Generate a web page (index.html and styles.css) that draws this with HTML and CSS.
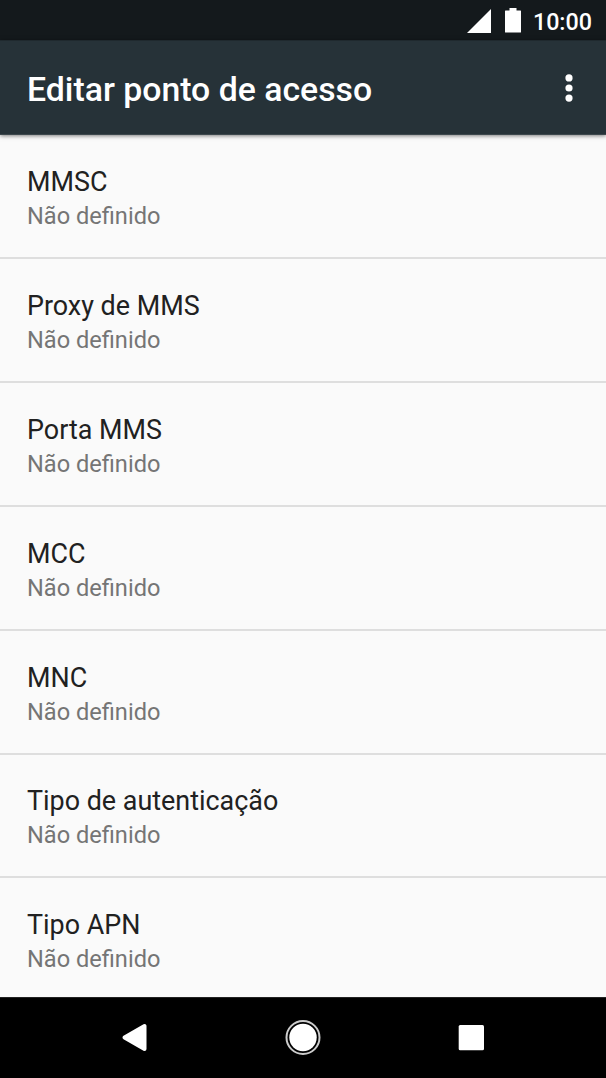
FILE: index.html
```html
<!DOCTYPE html>
<html lang="pt">
<head>
<meta charset="utf-8">
<title>Editar ponto de acesso</title>
<link rel="stylesheet" href="styles.css">
</head>
<body>
<div class="screen">
  <div class="status">
    <svg class="signal" width="24" height="24" viewBox="0 0 24 24"><path d="M24 0V24H0Z"/></svg>
    <svg class="battery" width="16" height="25" viewBox="0 0 16 25"><path d="M4.500 0H11.500V2.500H15.500Q16 2.500 16 3V24Q16 24.500 15.500 24.500H.5Q0 24.500 0 24V3Q0 2.500 .5 2.500H4.500Z"/></svg>
    <span class="clock">10:00</span>
  </div>
  <header class="bar">
    <h1 class="title">Editar ponto de acesso</h1>
    <svg class="more" width="8" height="28" viewBox="0 0 8 28"><circle cx="4" cy="3.900" r="3.600"/><circle cx="4" cy="14" r="3.600"/><circle cx="4" cy="24.100" r="3.600"/></svg>
  </header>
  <main class="list">
    <div class="row"><div class="name">MMSC</div><div class="value">Não definido</div></div>
    <div class="row"><div class="name">Proxy de MMS</div><div class="value">Não definido</div></div>
    <div class="row"><div class="name">Porta MMS</div><div class="value">Não definido</div></div>
    <div class="row"><div class="name">MCC</div><div class="value">Não definido</div></div>
    <div class="row"><div class="name">MNC</div><div class="value">Não definido</div></div>
    <div class="row"><div class="name">Tipo de autenticação</div><div class="value">Não definido</div></div>
    <div class="row"><div class="name">Tipo APN</div><div class="value">Não definido</div></div>
  </main>
  <nav class="nav">
    <svg width="36" height="36" viewBox="0 0 36 36"><path d="M7.500 17.500L27.500 6V29Z" stroke="#fff" stroke-width="4" stroke-linejoin="round"/></svg>
    <svg width="36" height="36" viewBox="0 0 36 36"><circle cx="18" cy="17.500" r="13.700"/><circle cx="18" cy="17.500" r="16.500" fill="none" stroke="#ccc" stroke-width="2"/></svg>
    <svg width="36" height="36" viewBox="0 0 36 36"><rect x="5.700" y="5" width="25.300" height="25.300" rx="1.500"/></svg>
  </nav>
</div>
</body>
</html>
```
FILE: styles.css
```css
body {
  margin: 0;
  font-family: Roboto, sans-serif;
}
.screen {
  width: 606px;
  height: 1078px;
  display: flex;
  flex-direction: column;
  overflow: hidden;
  background: #fafafa;
}
svg {
  display: block;
  fill: #fff;
}
.status {
  height: 40px;
  flex: none;
  display: flex;
  align-items: center;
  justify-content: flex-end;
  padding-right: 14px;
  box-sizing: border-box;
  background: #14191c;
}
.signal {
  margin-top: 1px;
}
.battery {
  margin: 0 12px 0 14px;
}
.clock {
  font-size: 23.3px;
  font-weight: 500;
  line-height: 40px;
  padding-top: 3px;
  color: #fff;
}
.bar {
  height: 95px;
  flex: none;
  display: flex;
  align-items: center;
  justify-content: space-between;
  padding: 0 33px 0 27px;
  box-sizing: border-box;
  background: #263238;
  border-top: 1px solid #1f292e;
  border-bottom: 1px solid #3c474c;
  box-shadow: 0 1px 4px rgba(0, 0, 0, 0.5);
  z-index: 1;
}
.title {
  margin: 4px 0 0;
  font-size: 33.8px;
  font-weight: 500;
  line-height: 40px;
  color: #fff;
}
.list {
  height: 862px;
  flex: none;
  box-sizing: border-box;
  padding-top: 0.6px;
  overflow: hidden;
}
.row {
  height: 123.8px;
  box-sizing: border-box;
  padding: 29.8px 27px 0;
  border-bottom: 2px solid #dedede;
}
.name {
  font-size: 26.9px;
  line-height: 34px;
  color: #212121;
}
.value {
  font-size: 23.6px;
  line-height: 34px;
  color: #757575;
}
.nav {
  flex: 1;
  display: flex;
  align-items: center;
  justify-content: center;
  gap: 132px;
  border-top: 1px solid #222;
  background: #000;
}
```
